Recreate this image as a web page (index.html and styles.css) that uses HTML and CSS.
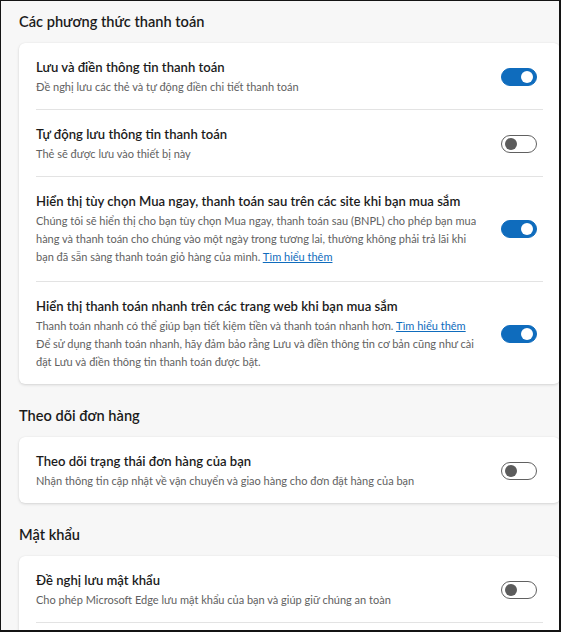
FILE: index.html
```html
<!DOCTYPE html>
<html lang="vi">
<head>
<meta charset="utf-8">
<link rel="stylesheet" href="styles.css">
</head>
<body>
<div class="frame">
  <section class="section">
    <h2 class="section-title">Các phương thức thanh toán</h2>
    <div class="card">
      <div class="row">
        <div class="text">
          <div class="title">Lưu và điền thông tin thanh toán</div>
          <div class="desc">Đề nghị lưu các thẻ và tự động điền chi tiết thanh toán</div>
        </div>
        <span class="toggle on"></span>
      </div>
      <div class="row">
        <div class="text">
          <div class="title">Tự động lưu thông tin thanh toán</div>
          <div class="desc">Thẻ sẽ được lưu vào thiết bị này</div>
        </div>
        <span class="toggle"></span>
      </div>
      <div class="row tall">
        <div class="text">
          <div class="title">Hiển thị tùy chọn Mua ngay, thanh toán sau trên các site khi bạn mua sắm</div>
          <div class="desc">Chúng tôi sẽ hiển thị cho bạn tùy chọn Mua ngay, thanh toán sau (BNPL) cho phép bạn mua hàng và thanh toán cho chúng vào một ngày trong tương lai, thường không phải trả lãi khi bạn đã sẵn sàng thanh toán giỏ hàng của mình. <a class="link" href="#">Tìm hiểu thêm</a></div>
        </div>
        <span class="toggle on"></span>
      </div>
      <div class="row">
        <div class="text">
          <div class="title">Hiển thị thanh toán nhanh trên các trang web khi bạn mua sắm</div>
          <div class="desc">Thanh toán nhanh có thể giúp bạn tiết kiệm tiền và thanh toán nhanh hơn. <a class="link" href="#">Tìm hiểu thêm</a></div>
          <div class="desc">Để sử dụng thanh toán nhanh, hãy đảm bảo rằng Lưu và điền thông tin cơ bản cũng như cài đặt Lưu và điền thông tin thanh toán được bật.</div>
        </div>
        <span class="toggle on"></span>
      </div>
    </div>
  </section>

  <section class="section">
    <h2 class="section-title">Theo dõi đơn hàng</h2>
    <div class="card">
      <div class="row">
        <div class="text">
          <div class="title">Theo dõi trạng thái đơn hàng của bạn</div>
          <div class="desc">Nhận thông tin cập nhật về vận chuyển và giao hàng cho đơn đặt hàng của bạn</div>
        </div>
        <span class="toggle"></span>
      </div>
    </div>
  </section>

  <section class="section">
    <h2 class="section-title">Mật khẩu</h2>
    <div class="card">
      <div class="row">
        <div class="text">
          <div class="title">Đề nghị lưu mật khẩu</div>
          <div class="desc">Cho phép Microsoft Edge lưu mật khẩu của bạn và giúp giữ chúng an toàn</div>
        </div>
        <span class="toggle"></span>
      </div>
      <div class="row">
        <div class="text">
          <div class="title">Tự động đăng nhập</div>
          <div class="desc">Tự động đăng nhập vào các trang web bằng thông tin đã lưu</div>
        </div>
        <span class="toggle on"></span>
      </div>
    </div>
  </section>
</div>
</body>
</html>
```

FILE: styles.css
```css
* { box-sizing: border-box; }

html, body {
  margin: 0;
  padding: 0;
}

body {
  font-family: "Segoe UI", Lato, "Noto Sans", sans-serif;
  color: #1b1b1b;
}

.frame {
  width: 561px;
  height: 632px;
  overflow: hidden;
  background: #f7f7f7;
  border-style: solid;
  border-color: #141414;
  border-width: 1px 2px 2px 1px;
  padding: 10px 0 0 18px;
}

.section {
  margin-bottom: 21px;
}

.section-title {
  margin: 0 0 10px;
  font-size: 14.6px;
  line-height: 22px;
  font-weight: 600;
  color: #1b1b1b;
}

.card {
  width: 541px;
  background: #fff;
  border-radius: 6px;
  box-shadow: 0 1px 3px rgba(0, 0, 0, 0.14), 0 0 1px rgba(0, 0, 0, 0.08);
  padding: 0 17px;
}

.row {
  display: flex;
  align-items: center;
  gap: 20px;
  padding: 14px 0 13px;
  border-top: 1px solid #e3e3e3;
}

.row.tall {
  padding-bottom: 15px;
}

.row:first-child {
  border-top: none;
}

.text {
  flex: 1;
  min-width: 0;
}

.title {
  font-size: 13.1px;
  line-height: 20px;
  font-weight: 600;
  color: #1b1b1b;
  margin-bottom: 1px;
}

.desc {
  font-size: 11px;
  line-height: 18px;
  color: #616161;
}

.link {
  color: #0f6cbd;
  text-decoration: underline;
}

.toggle {
  flex: none;
  position: relative;
  width: 36px;
  height: 18px;
  margin-right: 6px;
  border-radius: 10px;
  border: 1px solid #616161;
  background: #fff;
}

.toggle::after {
  content: "";
  position: absolute;
  top: 2px;
  left: 3px;
  width: 12px;
  height: 12px;
  border-radius: 50%;
  background: #5c5c5c;
}

.toggle.on {
  background: #0f6cbd;
  border-color: #0f6cbd;
}

.toggle.on::after {
  left: auto;
  right: 3px;
  background: #fff;
}
```
